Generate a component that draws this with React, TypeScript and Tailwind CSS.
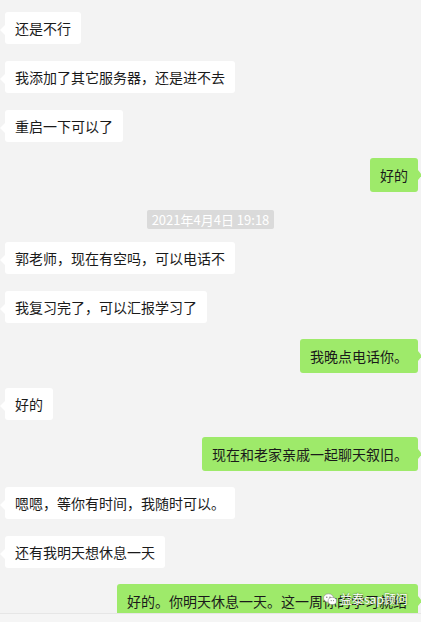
import React from 'react';

type Msg =
  | { kind: 'in' | 'out'; text: string; mt: string }
  | { kind: 'time'; text: string; mt: string };

const messages: Msg[] = [
  { kind: 'in', text: '还是不行', mt: 'mt-[12px]' },
  { kind: 'in', text: '我添加了其它服务器，还是进不去', mt: 'mt-[17px]' },
  { kind: 'in', text: '重启一下可以了', mt: 'mt-[17px]' },
  { kind: 'out', text: '好的', mt: 'mt-[16px]' },
  { kind: 'time', text: '2021年4月4日 19:18', mt: 'mt-[18px]' },
  { kind: 'in', text: '郭老师，现在有空吗，可以电话不', mt: 'mt-[13px]' },
  { kind: 'in', text: '我复习完了，可以汇报学习了', mt: 'mt-[17px]' },
  { kind: 'out', text: '我晚点电话你。', mt: 'mt-[16px]' },
  { kind: 'in', text: '好的', mt: 'mt-[15px]' },
  { kind: 'out', text: '现在和老家亲戚一起聊天叙旧。', mt: 'mt-[17px]' },
  { kind: 'in', text: '嗯嗯，等你有时间，我随时可以。', mt: 'mt-[16px]' },
  { kind: 'in', text: '还有我明天想休息一天', mt: 'mt-[17px]' },
  { kind: 'out', text: '好的。你明天休息一天。这一周你的学习就结束了，下周再继续。', mt: 'mt-[16px]' },
];

const font = { fontFamily: '"Noto Sans CJK SC", "Microsoft YaHei", sans-serif' };

const Incoming: React.FC<{ text: string; mt: string }> = ({ text, mt }) => (
  <div className={`flex justify-start pl-[5px] ${mt}`}>
    <div className="relative bg-white rounded-[3px] px-[10px] py-[6px] text-[14px] leading-[20px] text-[#1a1a1a] max-w-[301px]">
      <span className="absolute left-[-5px] top-[13px] w-0 h-0 border-y-[5px] border-y-transparent border-r-[5px] border-r-white" />
      {text}
    </div>
  </div>
);

const Outgoing: React.FC<{ text: string; mt: string }> = ({ text, mt }) => (
  <div className={`flex justify-end pr-[3px] ${mt}`}>
    <div className="relative bg-[#9eea6a] rounded-[3px] px-[10px] py-[7px] text-[14px] leading-[20px] text-[#1a1a1a] max-w-[301px]">
      <span className="absolute right-[-4px] top-[12px] w-0 h-0 border-y-[5px] border-y-transparent border-l-[4px] border-l-[#9eea6a]" />
      {text}
    </div>
  </div>
);

const App: React.FC = () => {
  return (
    <div className="w-[421px] h-[622px] flex flex-col bg-[#f3f3f3] overflow-hidden relative" style={font}>
      {/* Chat history */}
      <div className="flex-1 overflow-hidden flex flex-col">
        {messages.map((m, i) => {
          if (m.kind === 'time') {
            return (
              <div key={i} className={`flex justify-center ${m.mt}`}>
                <span className="bg-[#dadada] text-white text-[13px] leading-[19px] px-[5px] rounded-[2px]">
                  {m.text}
                </span>
              </div>
            );
          }
          return m.kind === 'in' ? (
            <Incoming key={i} text={m.text} mt={m.mt} />
          ) : (
            <Outgoing key={i} text={m.text} mt={m.mt} />
          );
        })}
      </div>

      {/* Bottom edge of the panel */}
      <div className="h-[9px] shrink-0 bg-[#f5f5f5] border-t border-[#e6e6e6]" />

      {/* Watermark */}
      <div className="absolute left-[323px] top-[591px] flex items-center gap-[3px] text-white text-[12px] leading-[16px] [text-shadow:0_0_2px_rgba(0,0,0,0.6)]">
        <svg width="14" height="13" viewBox="0 0 14 13" fill="none">
          <ellipse cx="5.5" cy="5" rx="5" ry="4.2" fill="white" stroke="#888" strokeWidth="0.6" />
          <ellipse cx="9.3" cy="8" rx="4.2" ry="3.6" fill="white" stroke="#888" strokeWidth="0.6" />
          <circle cx="3.8" cy="4.2" r="0.7" fill="#777" />
          <circle cx="7" cy="4.2" r="0.7" fill="#777" />
          <circle cx="8.2" cy="7.6" r="0.55" fill="#777" />
          <circle cx="10.6" cy="7.6" r="0.55" fill="#777" />
        </svg>
        <span>益泰sap顾问</span>
      </div>
    </div>
  );
};

export default App;
